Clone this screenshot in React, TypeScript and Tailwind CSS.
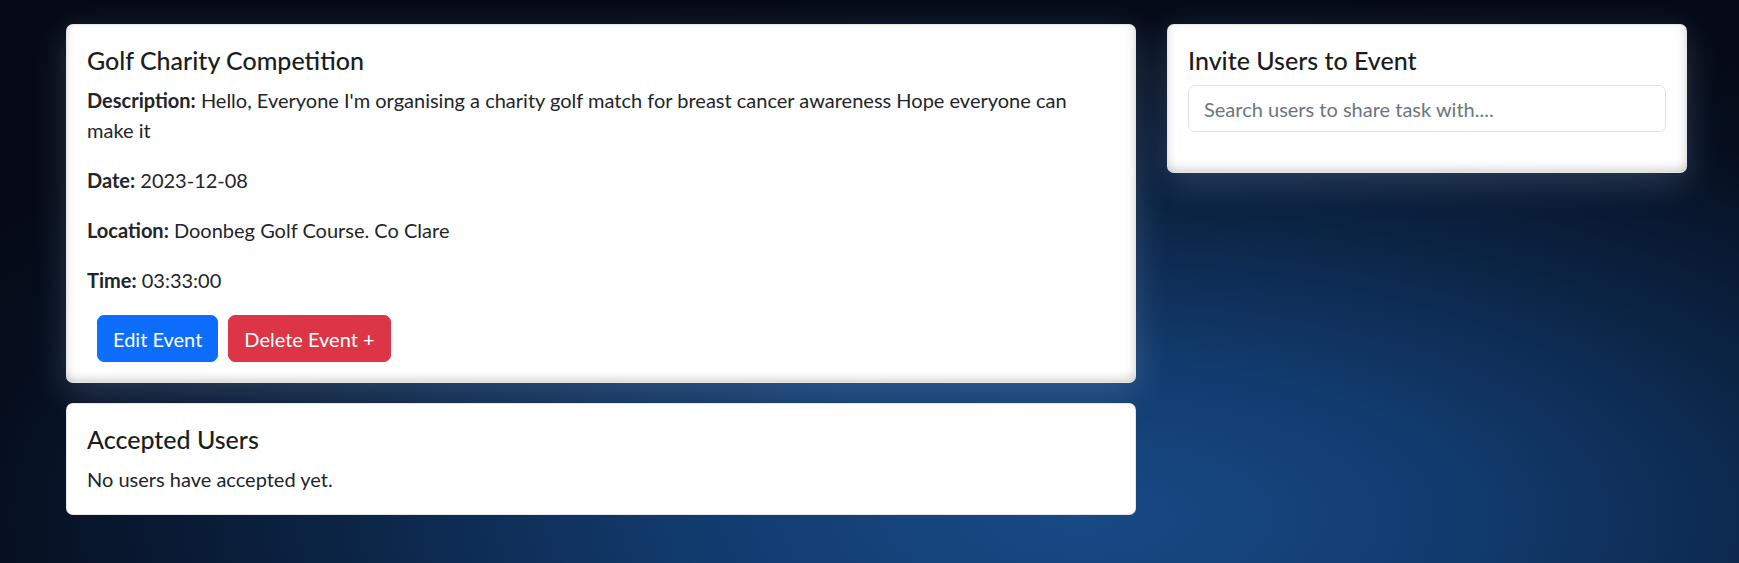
const raised =
  "shadow-[inset_0_-8px_10px_-4px_rgba(0,0,0,0.14),inset_-6px_0_12px_-6px_rgba(0,0,0,0.12),inset_6px_0_10px_-6px_rgba(0,0,0,0.1),0_10px_34px_rgba(170,200,240,0.22)]";

function Field({ label, value }: { label: string; value: string }) {
  return (
    <p className="mb-[20px] leading-[30px]">
      <strong className="font-bold">{label}:</strong> {value}
    </p>
  );
}

function EventCard() {
  return (
    <div className={`rounded-[7px] border border-black/10 bg-white p-[20px] ${raised}`}>
      <h5 className="mb-[10px] text-[25px] font-medium leading-[30px] text-[#1a1d20]">Golf Charity Competition</h5>
      <Field
        label="Description"
        value="Hello, Everyone I'm organising a charity golf match for breast cancer awareness Hope everyone can make it"
      />
      <Field label="Date" value="2023-12-08" />
      <Field label="Location" value="Doonbeg Golf Course. Co Clare" />
      <Field label="Time" value="03:33:00" />
      <div className="flex gap-[10px] pl-[10px]">
        <button className="h-[47px] rounded-[7px] border border-[#0d6efd] bg-[#0d6efd] px-[15px] text-[20px] leading-[30px] text-white">
          Edit Event
        </button>
        <button className="h-[47px] rounded-[7px] border border-[#dc3545] bg-[#dc3545] px-[15px] text-[20px] leading-[30px] text-white">
          Delete Event +
        </button>
      </div>
    </div>
  );
}

function AcceptedCard() {
  return (
    <div className="mt-[20px] rounded-[7px] border border-black/10 bg-white p-[20px]">
      <h5 className="mb-[10px] text-[25px] font-medium leading-[30px] text-[#1a1d20]">Accepted Users</h5>
      <p className="leading-[30px]">No users have accepted yet.</p>
    </div>
  );
}

function InviteCard() {
  return (
    <div className={`rounded-[7px] border border-black/10 bg-white p-[20px] ${raised}`}>
      <h5 className="mb-[10px] text-[25px] font-medium leading-[30px] text-[#1a1d20]">Invite Users to Event</h5>
      <input
        type="text"
        placeholder="Search users to share task with...."
        className="mb-[20px] block h-[47px] w-full rounded-[7px] border border-[#dee2e6] bg-white px-[15px] text-[20px] text-[#212529] placeholder:text-[#6c757d] outline-none"
      />
    </div>
  );
}

export default function App() {
  return (
    <div className="min-h-[563px] bg-[radial-gradient(ellipse_75%_95%_at_62%_92%,#184a86_0%,#123b6e_30%,#0b2343_58%,#060e1e_85%,#050a16_100%)] font-[family-name:Lato,'Noto_Sans',sans-serif] text-[20px] text-[#212529]">
      <div className="flex gap-[31px] pl-[66px] pt-[24px]">
        <div className="w-[1070px]">
          <EventCard />
          <AcceptedCard />
        </div>
        <div className="w-[520px]">
          <InviteCard />
        </div>
      </div>
    </div>
  );
}
